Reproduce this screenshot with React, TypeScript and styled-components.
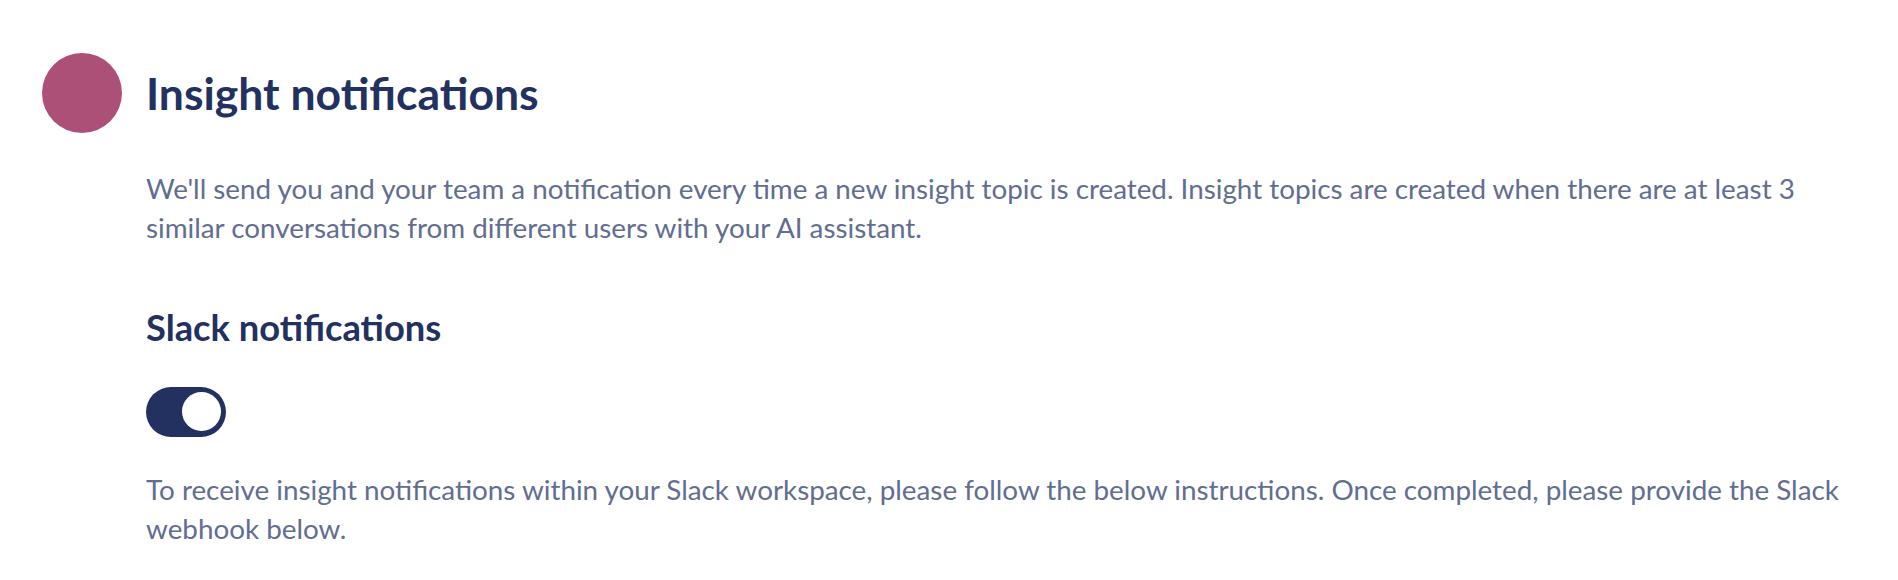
import { createGlobalStyle, styled } from 'styled-components';

const GlobalStyle = createGlobalStyle`
  html, body {
    margin: 0;
    padding: 0;
    background: #ffffff;
  }
  body {
    font-family: Lato, 'Open Sans', sans-serif;
    -webkit-font-smoothing: antialiased;
  }
`;

const Page = styled.div`
  padding: 53px 42px 0 42px;
`;

const Section = styled.section`
  display: grid;
  grid-template-columns: 80px 1fr;
  column-gap: 24px;
`;

const Dot = styled.div<{ color: string }>`
  width: 80px;
  height: 80px;
  border-radius: 50%;
  background-color: ${props => props.color};
`;

const Title = styled.h1`
  margin: 0;
  align-self: center;
  font-size: 44.5px;
  font-weight: 700;
  line-height: 1.2;
  color: #22315f;
`;

const Body = styled.div`
  grid-column: 2;
  display: flex;
  flex-direction: column;
`;

const Text = styled.p<{ top: number }>`
  margin: ${props => props.top}px 0 0 0;
  font-size: 27.8px;
  font-weight: 400;
  line-height: 39px;
  color: #616d91;
`;

const SubTitle = styled.h2`
  margin: 59px 0 0 0;
  font-size: 36.3px;
  font-weight: 700;
  line-height: 1.2;
  color: #22315f;
`;

const Toggle = styled.button<{ on: boolean }>`
  margin-top: 37px;
  width: 80px;
  height: 50px;
  border: none;
  border-radius: 25px;
  padding: 0 5px;
  display: flex;
  align-items: center;
  justify-content: ${props => (props.on ? 'flex-end' : 'flex-start')};
  background-color: ${props => (props.on ? '#233160' : '#c9cdd9')};
  cursor: pointer;
`;

const Knob = styled.span`
  width: 39px;
  height: 39px;
  border-radius: 50%;
  background: #ffffff;
`;

export default function App() {
  return (
    <>
      <GlobalStyle />
      <Page>
        <Section>
          <Dot color='#ad5077' />
          <Title>Insight notifications</Title>
          <Body>
            <Text top={36}>
              We'll send you and your team a notification every time a new insight topic is created. Insight topics are created when there are at least 3 similar conversations from different users with your AI assistant.
            </Text>
            <SubTitle>Slack notifications</SubTitle>
            <div>
              <Toggle on aria-label='Slack notifications'>
                <Knob />
              </Toggle>
            </div>
            <Text top={33}>
              To receive insight notifications within your Slack workspace, please follow the below instructions. Once completed, please provide the Slack webhook below.
            </Text>
          </Body>
        </Section>
      </Page>
    </>
  );
}
